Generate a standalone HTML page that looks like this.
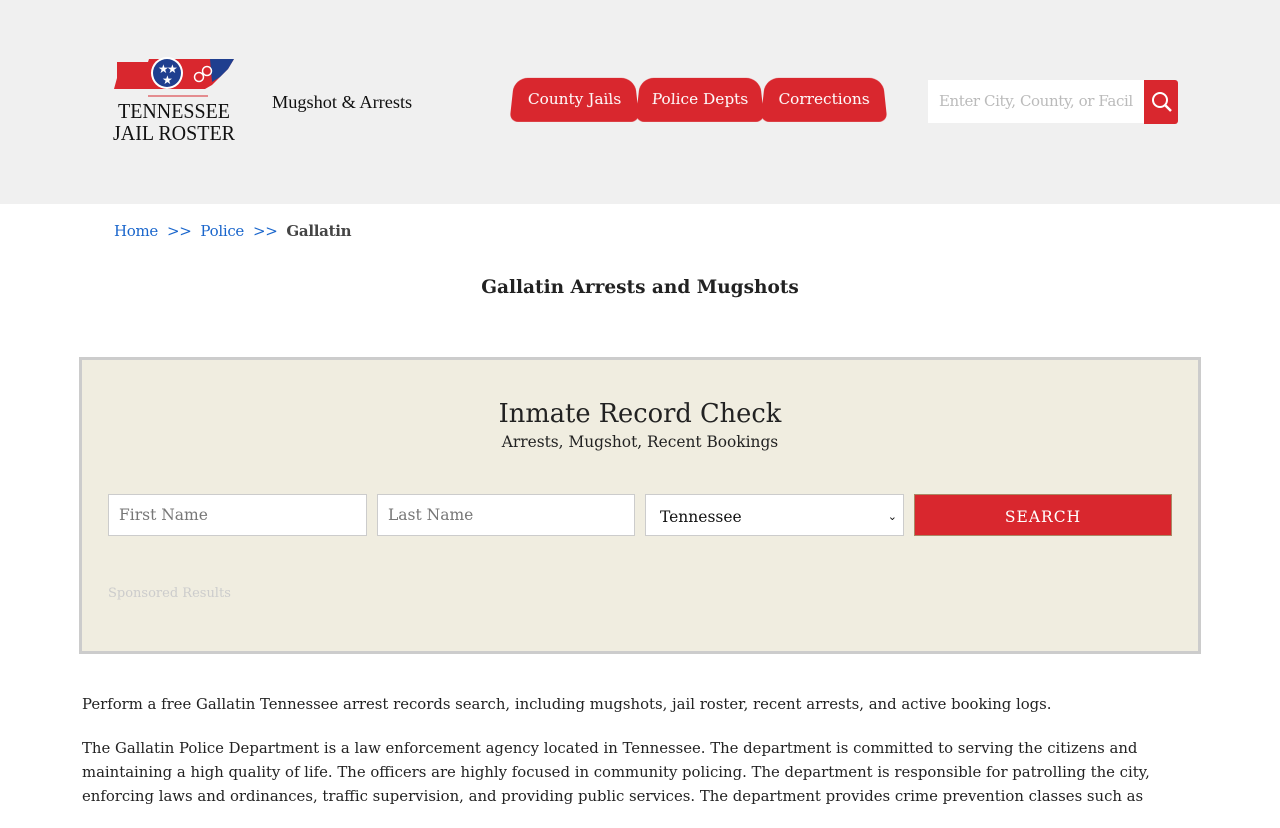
<!DOCTYPE html>
<html><head><meta charset="utf-8"><style>
*{box-sizing:border-box;margin:0;padding:0}
body{width:1280px;height:800px;overflow:hidden;background:#fff;font-family:"DejaVu Serif","Liberation Serif",serif;color:#222}
.hdr{height:204px;background:#f0f0f0;position:relative}
.tag{position:absolute;left:272px;top:92px;color:#111;font-family:"Liberation Serif",serif;font-size:18.3px}
.tab{position:absolute;top:77px;height:44px;background:#d9272e;color:#fff;font-size:15.3px;line-height:44px;text-align:center;border-radius:14px 14px 8px 8px;transform:perspective(40px) rotateX(4deg);}
.srch{position:absolute;left:928px;top:80px;width:216px;height:43px;background:#fff;font-size:15px;color:#bbb;line-height:43px;padding-left:11px;white-space:nowrap;overflow:hidden;letter-spacing:-0.4px}
.sbtn{position:absolute;left:1144px;top:80px;width:34px;height:44px;background:#d9272e;border-radius:0 3px 3px 0}
.bc{position:absolute;left:114px;top:222px;font-size:15px;color:#1a66cc;letter-spacing:-0.3px}
.bc b{color:#444}
h1{position:absolute;top:277px;width:100%;text-align:center;font-size:18.5px;font-weight:bold;color:#222}
.box{position:absolute;left:79px;top:357px;width:1122px;height:297px;background:#f0ede0;border:3px solid #ccc}
.box h2{position:absolute;top:39px;width:100%;text-align:center;font-weight:normal;font-size:25.7px}
.box p.s{position:absolute;top:73px;width:100%;text-align:center;font-size:15.4px}
.in{position:absolute;top:134px;height:42px;background:#fff;border:1px solid #ccc;font-size:15.5px;color:#777;line-height:40px;padding-left:10px}
.btn{position:absolute;left:832px;top:134px;width:258px;height:42px;background:#d9272e;border:1px solid #a86;color:#fff;font-size:15.5px;letter-spacing:1px;text-align:center;line-height:44px}
.sp{position:absolute;left:26px;top:226px;font-size:13px;color:#ccc}
.txt{position:absolute;left:82px;top:692px;width:1100px;font-size:14.85px;line-height:24px;color:#222}
.txt p{margin-bottom:20px}
</style></head><body>
<div class="hdr">
<svg style="position:absolute;left:108px;top:56px" width="134" height="92" viewBox="0 0 134 92">
<path d="M9 6 L40 6 L41 3 L126 3 L120 13 L112 21 L104 29 L97 33 L6 33 L9 22 Z" fill="#d9272e"/>
<path d="M102 3 L126 3 L120 13 L112 21 L104 26 Z" fill="#1f3f8f"/>
<circle cx="59" cy="17" r="16" fill="#fff"/><circle cx="59" cy="17" r="14" fill="#1f3f8f"/>
<text x="50" y="17" fill="#fff" font-size="12">★</text><text x="59" y="17" fill="#fff" font-size="12">★</text><text x="54" y="28" fill="#fff" font-size="12">★</text>
<circle cx="91" cy="21" r="4.5" fill="none" stroke="#fff" stroke-width="1.5"/><circle cx="99" cy="15" r="4.5" fill="none" stroke="#fff" stroke-width="1.5"/>
<path d="M40 40 H100" stroke="#d9272e" stroke-width="1"/>
<text x="66" y="62" text-anchor="middle" font-family="Liberation Serif" font-size="21" fill="#111" textLength="112" lengthAdjust="spacingAndGlyphs">TENNESSEE</text>
<text x="66" y="84" text-anchor="middle" font-family="Liberation Serif" font-size="21" fill="#111" textLength="122" lengthAdjust="spacingAndGlyphs">JAIL ROSTER</text>
</svg>
<div class="tag">Mugshot &amp; Arrests</div>
<div class="tab" style="left:512px;width:125px">County Jails</div>
<div class="tab" style="left:638px;width:124px">Police Depts</div>
<div class="tab" style="left:763px;width:122px">Corrections</div>
<div class="srch">Enter City, County, or Facil</div>
<div class="sbtn"><svg width="34" height="44"><circle cx="16" cy="20" r="7" fill="none" stroke="#fff" stroke-width="2"/><path d="M21 25 L27 31" stroke="#fff" stroke-width="2.5"/></svg></div>
</div>
<div class="bc">Home &nbsp;&gt;&gt;&nbsp; Police &nbsp;&gt;&gt;&nbsp; <b>Gallatin</b></div>
<h1>Gallatin Arrests and Mugshots</h1>
<div class="box">
<h2>Inmate Record Check</h2>
<p class="s">Arrests, Mugshot, Recent Bookings</p>
<div class="in" style="left:26px;width:259px">First Name</div>
<div class="in" style="left:295px;width:258px">Last Name</div>
<div class="in" style="left:563px;width:259px;color:#111;line-height:44px;padding-left:14px">Tennessee<span style="position:absolute;right:6px;font-size:11px">⌄</span></div>
<div class="btn">SEARCH</div>
<div class="sp">Sponsored Results</div>
</div>
<div class="txt"><p>Perform a free Gallatin Tennessee arrest records search, including mugshots, jail roster, recent arrests, and active booking logs.</p>
<p>The Gallatin Police Department is a law enforcement agency located in Tennessee. The department is committed to serving the citizens and maintaining a high quality of life. The officers are highly focused in community policing. The department is responsible for patrolling the city, enforcing laws and ordinances, traffic supervision, and providing public services. The department provides crime prevention classes such as</p></div>
</body></html>
